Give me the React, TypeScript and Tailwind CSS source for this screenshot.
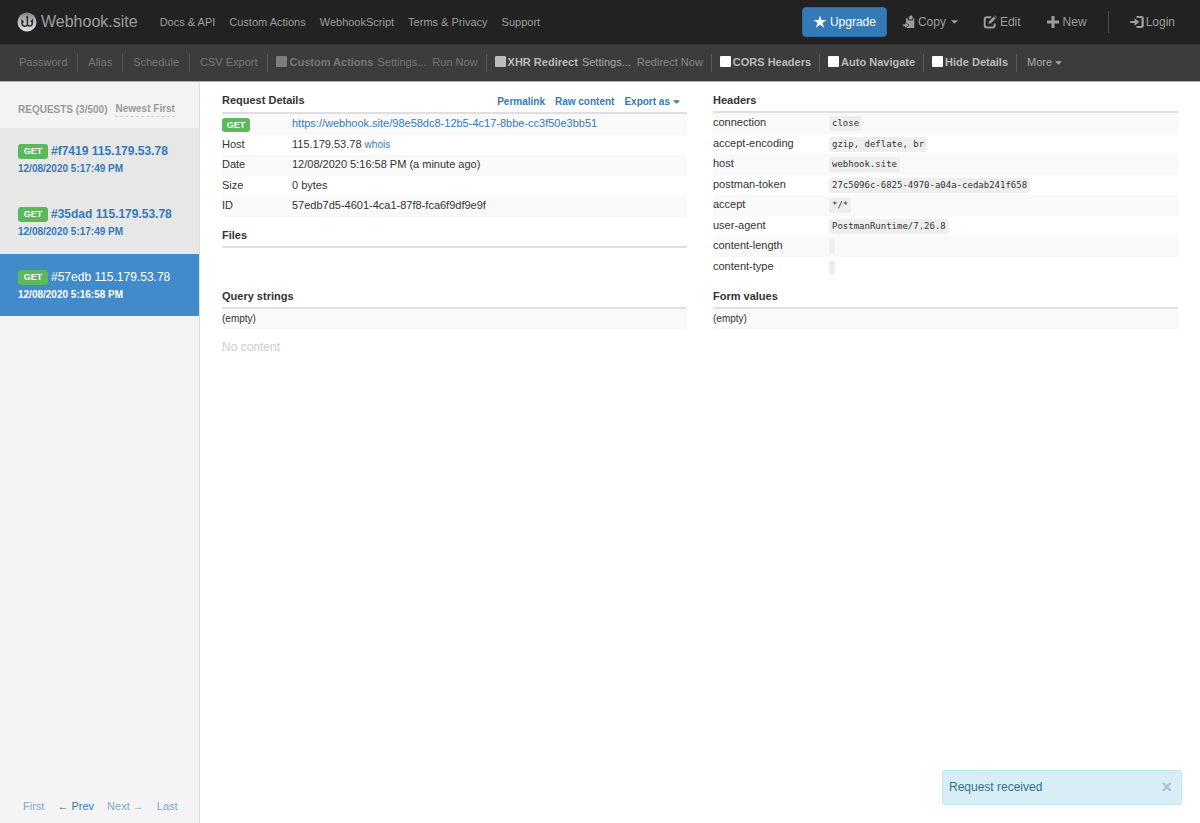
import { useState } from 'react'
import type { ReactNode } from 'react'
import clsx from 'clsx'

const requests = [
  { id: 'f7419', method: 'GET', ip: '115.179.53.78', date: '12/08/2020 5:17:49 PM', unread: true },
  { id: '35dad', method: 'GET', ip: '115.179.53.78', date: '12/08/2020 5:17:49 PM', unread: true },
  { id: '57edb', method: 'GET', ip: '115.179.53.78', date: '12/08/2020 5:16:58 PM', unread: false },
]

const headers = [
  ['connection', 'close'],
  ['accept-encoding', 'gzip, deflate, br'],
  ['host', 'webhook.site'],
  ['postman-token', '27c5096c-6825-4970-a04a-cedab241f658'],
  ['accept', '*/*'],
  ['user-agent', 'PostmanRuntime/7.26.8'],
  ['content-length', ''],
  ['content-type', ''],
]

const navLinks = ['Docs & API', 'Custom Actions', 'WebhookScript', 'Terms & Privacy', 'Support']

function Logo() {
  return (
    <svg viewBox="0 0 20 20" className="size-5 shrink-0" aria-hidden="true">
      <defs>
        <linearGradient id="ball" x1="0" y1="0" x2="0" y2="1">
          <stop offset="0" stopColor="#808080" />
          <stop offset="0.5" stopColor="#bdbdbd" />
          <stop offset="1" stopColor="#dedede" />
        </linearGradient>
      </defs>
      <circle cx="10" cy="10" r="9.5" fill="url(#ball)" />
      <path
        d="M10.4 5v8M10.4 12.4c-.6 2.6-5.3 2.5-5.4-1.2V8.8l1.6 1.6M10.4 12.4c.6 2.4 4.8 2.2 4.900-1.200V8.400L13.800 10"
        fill="none"
        stroke="#2a2a2a"
        strokeWidth="1.5"
      />
      <circle cx="10.2" cy="5" r="1" fill="#2a2a2a" />
    </svg>
  )
}

function Caret() {
  return (
    <svg viewBox="0 0 8 4" className="ml-[3px] inline-block h-1 w-[7px] align-middle" aria-hidden="true">
      <path d="M0 0h8L4 4z" fill="currentColor" />
    </svg>
  )
}

function Icon({ children }: { children: ReactNode }) {
  return (
    <svg viewBox="0 0 14 14" className="size-[14px] shrink-0" fill="currentColor" aria-hidden="true">
      {children}
    </svg>
  )
}

function StarIcon() {
  return (
    <Icon>
      <path d="M7 .6l1.5 4.5h5L9.5 8l1.6 4.7L7 9.8l-4.1 2.9L4.5 8 .5 5.1h5z" />
    </Icon>
  )
}

function CopyIcon() {
  return (
    <Icon>
      <path d="M4 3.2h1.2l1.3 2.3h4.3l.6-2.3h.9v9.9H4z" />
      <path d="M6.300 2.600h1C7.3 1.200 8 .6 9 .6s1.700.6 1.700 1.600v.9l-.5 1.500H7.300z" />
      <path d="M-.2 9.3c1.200-.3 2.300-.4 3.300-.3V7l4 3.200-4 3.200v-1.700C2 11.600.9 11.700-.2 12l1.400-1.400z" stroke="#222" strokeWidth=".7" />
    </Icon>
  )
}

function EditIcon() {
  return (
    <Icon>
      <path
        d="M8.2 2.2H4C2.7 2.2 1.7 3.2 1.7 4.5v5.8c0 1.2 1 2.2 2.3 2.2h5.400c1.300 0 2.300-1 2.300-2.200V8.500"
        fill="none"
        stroke="currentColor"
        strokeWidth="2"
      />
      <path d="M5.2 9.2l.7-2.900 4.900-4.900 2.100 2.100L8 8.400zM11.400.9l.7-.6 1.900 1.900-.6.7z" stroke="#222" strokeWidth=".4" />
    </Icon>
  )
}

function PlusIcon() {
  return (
    <Icon>
      <path d="M5.5 1h3v4.5H13v3H8.500V13h-3V8.500H1v-3h4.500z" />
    </Icon>
  )
}

function LoginIcon() {
  return (
    <Icon>
      <path d="M6.500 1h5c1.400 0 2.300.9 2.300 2.200v7.600c0 1.300-.9 2.200-2.300 2.200h-5v-2h5V3h-5z" />
      <path d="M.2 5.900h4.300V3.200L9.400 7l-4.900 3.800V8.100H.2z" />
    </Icon>
  )
}

function ToolItem({ children, wide, last }: { children: ReactNode; wide?: boolean; last?: boolean }) {
  return (
    <li
      className={clsx(
        'flex h-[18px] shrink-0 items-center gap-[6px]',
        wide ? 'px-[10px]' : 'px-2',
        !last && 'border-r border-[#5a5a5a]',
      )}
    >
      {children}
    </li>
  )
}

function ToolCheck({ label, className, boxClassName, disabled }: { label: string; className?: string; boxClassName?: string; disabled?: boolean }) {
  return (
    <label className={clsx('flex items-center gap-[2px] font-bold', className ?? 'text-[#bbb]')}>
      <input
        type="checkbox"
        disabled={disabled}
        className={clsx('mb-[3px] size-[11px] appearance-none rounded-[1px] checked:bg-[#337ab7]', boxClassName ?? 'bg-white')}
      />
      {label}
    </label>
  )
}

function Method({ name, small }: { name: string; small?: boolean }) {
  return (
    <span
      className={clsx(
        'flex items-center justify-center rounded-[3px] bg-[#5cb85c] text-[9px] font-bold text-white',
        small ? 'mt-1 h-[14px] w-7' : 'h-[15px] w-[30px]',
      )}
    >
      {name}
    </span>
  )
}

function SectionTitle({ title, children }: { title: string; children?: ReactNode }) {
  return (
    <div className={clsx('flex justify-between border-b-2 border-[#dfdfdf] pt-[10px]', children ? 'pb-px' : 'pb-[3px]')}>
      <h2 className="text-[11px] leading-4 font-bold">{title}</h2>
      {children}
    </div>
  )
}

function Row({ label, children }: { label: ReactNode; children?: ReactNode }) {
  return (
    <tr className="align-top odd:h-[21px] odd:bg-[#f9f9f9] even:h-5">
      <th scope="row" className="text-left font-normal">{label}</th>
      <td>{children}</td>
    </tr>
  )
}

function EmptySection({ title }: { title: string }) {
  return (
    <section>
      <SectionTitle title={title} />
      <p className="bg-[#f9f9f9] text-[10px] leading-5">(empty)</p>
    </section>
  )
}

function TopBar() {
  return (
    <header className="flex h-11 items-center bg-[#222] pr-[25px] pl-[17px] text-[#9d9d9d]">
      <a href="#" className="flex items-center gap-1 text-base">
        <Logo />
        Webhook.site
      </a>
      <nav className="ml-[22px] flex flex-1 gap-[14px] text-[11px] whitespace-nowrap">
        {navLinks.map((l) => (
          <a key={l} href="#">{l}</a>
        ))}
      </nav>
      <div className="flex items-center text-xs">
        <button className="flex h-[30px] items-center gap-[3px] rounded-[4px] border border-[#2e6da4] bg-[#337ab7] px-[10px] text-white">
          <StarIcon />
          Upgrade
        </button>
        <button className="ml-[15px] flex items-center gap-[2px]">
          <CopyIcon />
          Copy
          <Caret />
        </button>
        <button className="ml-[25px] flex items-center gap-[3px]">
          <EditIcon />
          Edit
        </button>
        <button className="ml-[25px] flex items-center gap-[3px]">
          <PlusIcon />
          New
        </button>
        <div className="mx-[21px] h-[22px] border-l border-[#505050]" />
        <a href="#" className="flex items-center gap-[2px]">
          <LoginIcon />
          Login
        </a>
      </div>
    </header>
  )
}

function ToolBar() {
  return (
    <ul className="flex h-[38px] items-center border-t border-b border-t-[#333] border-b-[#aaa] bg-[#3c3c3c] pb-px pl-[9px] text-[11px] whitespace-nowrap text-[#777]">
      <ToolItem wide><button>Password</button></ToolItem>
      <ToolItem wide><button>Alias</button></ToolItem>
      <ToolItem wide><button>Schedule</button></ToolItem>
      <ToolItem wide><button>CSV Export</button></ToolItem>
      <ToolItem>
        <div className="flex gap-1">
          <ToolCheck label="Custom Actions" className="text-[#777]" boxClassName="bg-[#7d7d7d]" disabled />
          <button>Settings...</button>
        </div>
        <button>Run Now</button>
      </ToolItem>
      <ToolItem>
        <div className="flex gap-1">
          <ToolCheck label="XHR Redirect" boxClassName="bg-[#bcbcbc]" />
          <button className="text-[#aaa]">Settings...</button>
        </div>
        <button className="text-[#888]">Redirect Now</button>
      </ToolItem>
      <ToolItem><ToolCheck label="CORS Headers" /></ToolItem>
      <ToolItem><ToolCheck label="Auto Navigate" /></ToolItem>
      <ToolItem><ToolCheck label="Hide Details" /></ToolItem>
      <ToolItem wide last>
        <button className="flex items-center text-[#aaa]">
          More
          <Caret />
        </button>
      </ToolItem>
    </ul>
  )
}

function Sidebar() {
  const [active, setActive] = useState('57edb')

  return (
    <aside className="flex w-[200px] shrink-0 flex-col border-r border-[#ddd] bg-[#f4f4f4]">
      <div className="flex h-[46px] items-center gap-2 pt-2 pl-[18px] text-[10px] font-bold whitespace-nowrap text-[#999]">
        <h2>REQUESTS (3/500)</h2>
        <button className="border-b border-dashed border-[#ccc]">Newest First</button>
      </div>
      <ul className="flex flex-col gap-px bg-[#e7e7e7]">
        {requests.map((r) => (
          <li key={r.id}>
            <button
              onClick={() => setActive(r.id)}
              className={clsx(
                'flex h-[62px] w-full flex-col pt-[14px] pl-[18px] text-left whitespace-nowrap',
                r.id === active ? 'bg-[#428bca] text-white' : 'text-[#337ab7]',
              )}
            >
              <span className={clsx('flex items-center gap-[3px] text-xs leading-[18px]', r.unread && 'font-bold')}>
                <Method name={r.method} />
                #{r.id} {r.ip}
              </span>
              <span className="text-[10px] leading-[18px] font-bold">{r.date}</span>
            </button>
          </li>
        ))}
      </ul>
      <nav className="mt-auto flex gap-[13px] pb-[9px] pl-[23px] text-[11px] leading-4 text-[#7aaad0]">
        <a href="#">First</a>
        <a href="#" className="text-[#337ab7]">← Prev</a>
        <a href="#">Next →</a>
        <a href="#">Last</a>
      </nav>
    </aside>
  )
}

function Details() {
  return (
    <div>
      <SectionTitle title="Request Details">
        <div className="flex gap-[10px] pr-[7px] text-[10px] leading-[19px] font-bold text-[#337ab7]">
          <a href="#">Permalink</a>
          <a href="#">Raw content</a>
          <button className="flex items-center">
            Export as
            <Caret />
          </button>
        </div>
      </SectionTitle>
      <table className="w-full text-[11px] leading-[19px]">
        <colgroup>
          <col className="w-[70px]" />
          <col />
        </colgroup>
        <tbody>
          <Row label={<Method name="GET" small />}>
            <a href="#" className="text-[#337ab7]">https://webhook.site/98e58dc8-12b5-4c17-8bbe-cc3f50e3bb51</a>
          </Row>
          <Row label="Host">
            115.179.53.78 <a href="#" className="text-[10px] text-[#337ab7]">whois</a>
          </Row>
          <Row label="Date">12/08/2020 5:16:58 PM (a minute ago)</Row>
          <Row label="Size">0 bytes</Row>
          <Row label="ID">57edb7d5-4601-4ca1-87f8-fca6f9df9e9f</Row>
        </tbody>
      </table>
      <SectionTitle title="Files" />
    </div>
  )
}

function Headers() {
  return (
    <section>
      <SectionTitle title="Headers" />
      <table className="w-full text-[11px] leading-[19px]">
        <colgroup>
          <col className="w-[116px]" />
          <col />
        </colgroup>
        <tbody>
          {headers.map(([name, value]) => (
            <Row key={name} label={name}>
              <code className="mt-[3px] block h-[15px] w-fit rounded-[3px] bg-[#eee] px-[3px] font-['DejaVu_Sans_Mono',monospace] text-[9px] leading-[15px]">
                {value}
              </code>
            </Row>
          ))}
        </tbody>
      </table>
    </section>
  )
}

export default function App() {
  const [toast, setToast] = useState(true)

  return (
    <div className="flex min-h-screen flex-col bg-white font-['Liberation_Sans',Arial,sans-serif] text-[#333]">
      <TopBar />
      <ToolBar />
      <div className="flex flex-1">
        <Sidebar />
        <main className="min-w-0 flex-1 px-[22px]">
          <div className="grid grid-cols-2 gap-x-[26px] gap-y-px">
            <Details />
            <Headers />
            <EmptySection title="Query strings" />
            <EmptySection title="Form values" />
          </div>
          <p className="mt-[10px] text-xs leading-4 text-[#ccc]">No content</p>
        </main>
      </div>

      {toast && (
        <div
          role="alert"
          className="fixed right-[18px] bottom-[18px] flex h-[35px] w-60 items-center justify-between rounded-[3px] border border-[#bce8f1] bg-[#d9edf7] pr-[9px] pb-[2px] pl-[6px] text-xs text-[#31708f]"
        >
          Request received
          <button aria-label="Close" onClick={() => setToast(false)} className="text-lg leading-4 font-bold text-[#aebfc7]">
            ×
          </button>
        </div>
      )}
    </div>
  )
}
